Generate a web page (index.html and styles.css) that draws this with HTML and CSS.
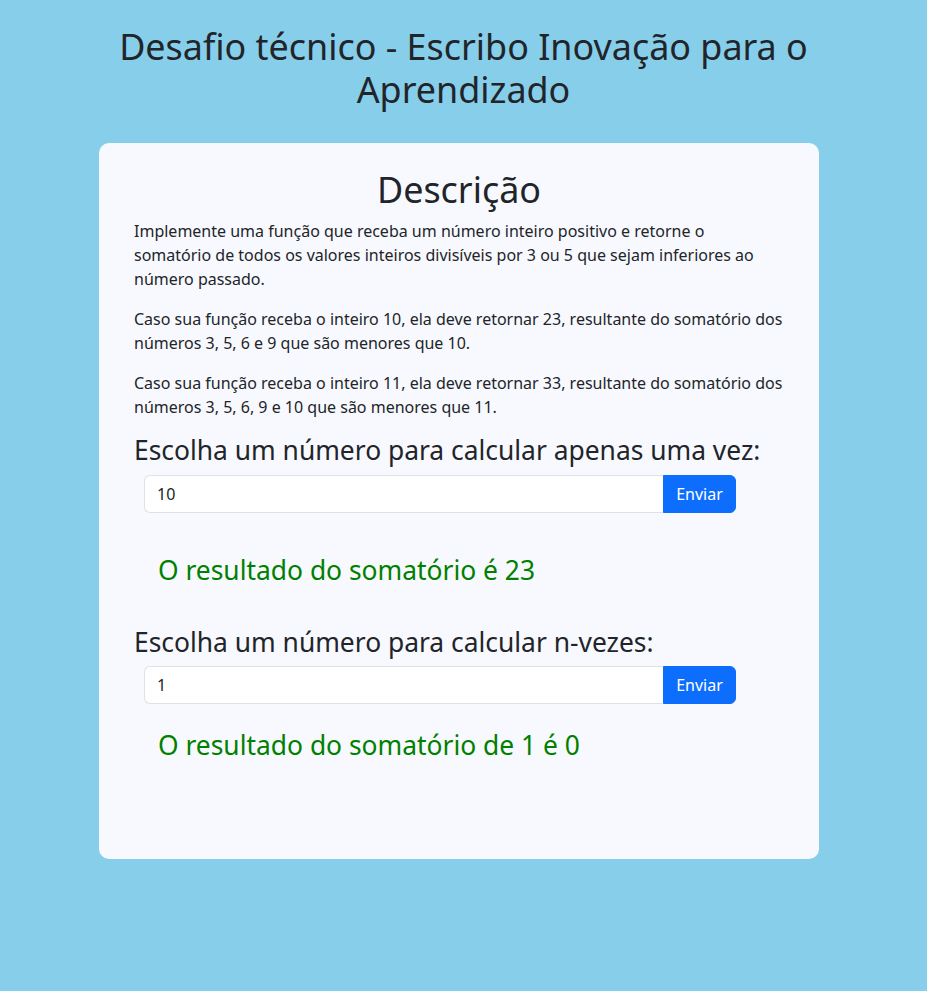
FILE: index.html
```html
<!DOCTYPE html>
<html lang="pt-BR">
<head>
<meta charset="utf-8">
<title>Desafio técnico</title>
<link rel="stylesheet" href="styles.css">
</head>
<body>
<header class="page-header">
  <h1 class="page-title">Desafio técnico - Escribo Inovação para o Aprendizado</h1>
</header>
<main class="card">
  <h1 class="card-title">Descrição</h1>
  <p class="text">Implemente uma função que receba um número inteiro positivo e retorne o somatório de todos os valores inteiros divisíveis por 3 ou 5 que sejam inferiores ao número passado.</p>
  <p class="text">Caso sua função receba o inteiro 10, ela deve retornar 23, resultante do somatório dos números 3, 5, 6 e 9 que são menores que 10.</p>
  <p class="text">Caso sua função receba o inteiro 11, ela deve retornar 33, resultante do somatório dos números 3, 5, 6, 9 e 10 que são menores que 11.</p>

  <section class="calc">
    <h3 class="calc-title">Escolha um número para calcular apenas uma vez:</h3>
    <form class="input-group">
      <input class="form-control" type="number" value="10">
      <button class="btn" type="button">Enviar</button>
    </form>
    <h3 class="result result-first">O resultado do somatório é 23</h3>
  </section>

  <section class="calc">
    <h3 class="calc-title">Escolha um número para calcular n-vezes:</h3>
    <form class="input-group">
      <input class="form-control" type="number" value="1">
      <button class="btn" type="button">Enviar</button>
    </form>
    <h3 class="result result-second">O resultado do somatório de 1 é 0</h3>
  </section>
</main>
</body>
</html>
```

FILE: styles.css
```css
* { box-sizing: border-box; }

html, body {
  margin: 0;
  padding: 0;
}

body {
  background: #87ceeb;
  font-family: "Noto Sans", sans-serif;
  color: #212529;
  font-size: 16px;
  line-height: 1.5;
  min-height: 991px;
}

.page-header {
  padding-top: 25px;
  display: flex;
  justify-content: center;
}

.page-title {
  margin: 0;
  width: 720px;
  text-align: center;
  font-weight: 400;
  font-size: 35.9px;
  line-height: 1.2;
}

.card {
  width: 720px;
  margin: 32px 0 0 99px;
  background: #f8f9fe;
  border-radius: 10px;
  padding: 25px 35px 97px 35px;
}

.card-title {
  margin: 0 0 8px;
  text-align: center;
  font-weight: 400;
  font-size: 35.9px;
  line-height: 1.2;
}

.text {
  margin: 0 0 16px;
}

.calc-title {
  margin: 0 0 8px;
  font-weight: 400;
  font-size: 26.4px;
  line-height: 1.2;
}

.input-group {
  display: flex;
  margin: 0 48px 0 10px;
  height: 38px;
}

.form-control {
  flex: 1;
  min-width: 0;
  border: 1px solid #dee2e6;
  border-right: none;
  border-radius: 6px 0 0 6px;
  padding: 6px 12px;
  font: inherit;
  color: #212529;
  background: #fff;
  -moz-appearance: textfield;
}

.form-control::-webkit-outer-spin-button,
.form-control::-webkit-inner-spin-button {
  -webkit-appearance: none;
  margin: 0;
}

.btn {
  width: 73px;
  border: 1px solid #0d6efd;
  background: #0d6efd;
  color: #fff;
  font: inherit;
  border-radius: 0 6px 6px 0;
  padding: 6px 12px;
}

.result {
  color: #008000;
  font-weight: 400;
  font-size: 26.4px;
  line-height: 1.2;
  padding-left: 24px;
}

.result-first {
  margin: 42px 0 40px;
}

.result-second {
  margin: 26px 0 0;
}
```
